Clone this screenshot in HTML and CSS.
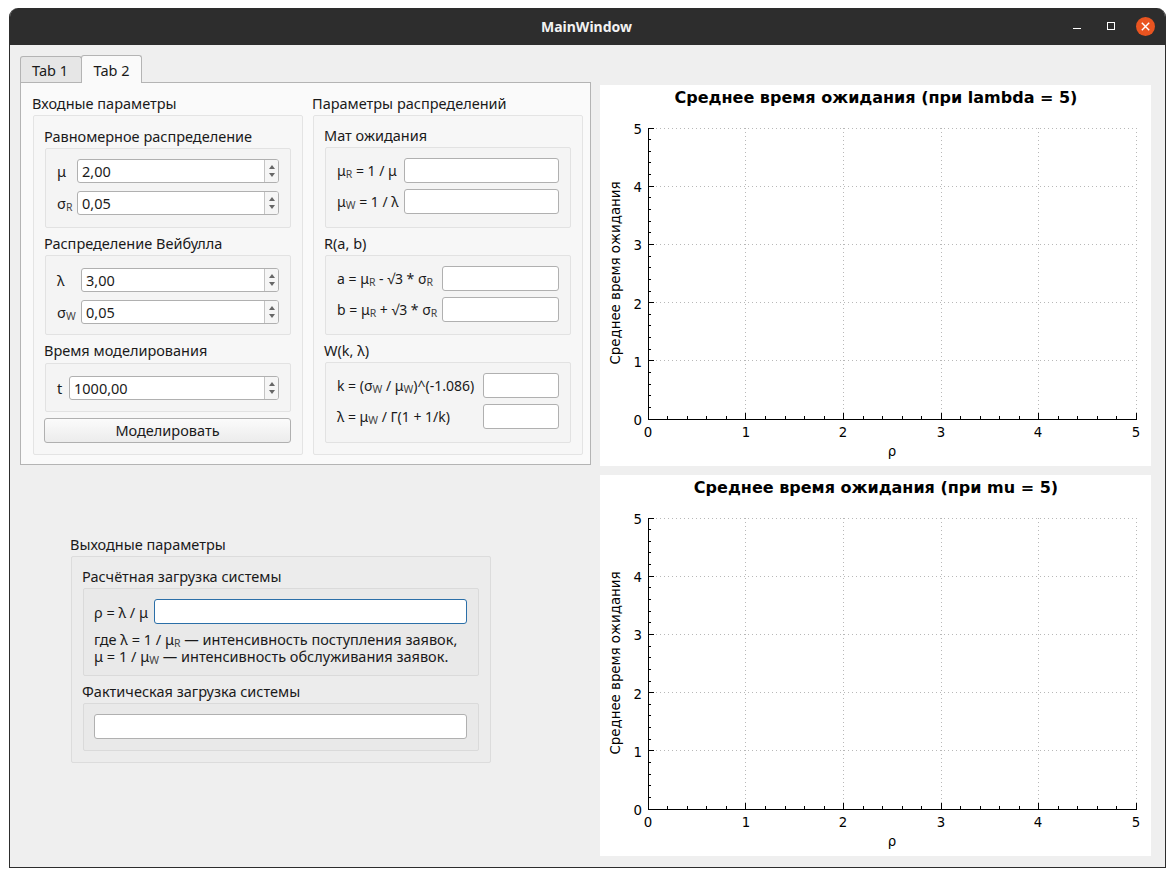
FILE: index.html
```html
<!DOCTYPE html>
<html lang="en">
<head>
    <meta charset="UTF-8">
    <title>MainWindow</title>
    <link rel="stylesheet" href="styles.css">
</head>
<body>
<div class="window">
    <div class="titlebar">
        <span class="title">MainWindow</span>
        <div class="controls">
            <svg width="12" height="13" viewBox="0 0 12 13"><path d="M1 8.5h8" stroke="#fff"/></svg>
            <svg width="12" height="13" viewBox="0 0 12 13"><rect x="2.5" y="2.5" width="7" height="7" fill="none" stroke="#fff"/></svg>
            <svg width="19" height="19" viewBox="0 0 19 19"><circle cx="9.5" cy="9.5" r="9.5" fill="#e95420"/><path d="M5.8 5.8l7.4 7.4M13.2 5.8l-7.4 7.4" stroke="#fff" stroke-width="1.4"/></svg>
        </div>
    </div>

    <div class="content">
        <div class="left">
            <div class="tabs">
                <div class="tab">Tab 1</div>
                <div class="tab active">Tab 2</div>
            </div>
            <div class="panel">
                <div class="col">
                    <div class="col-title">Входные параметры</div>
                    <div class="group">
                        <div class="box-title first">Равномерное распределение</div>
                        <div class="box grid-spin1">
                            <label>μ</label>
                            <div class="spin"><span class="spin-value">2,00</span><span class="spin-btns"><i class="up"></i><i class="down"></i></span></div>
                            <label>σ<sub>R</sub></label>
                            <div class="spin"><span class="spin-value">0,05</span><span class="spin-btns"><i class="up"></i><i class="down"></i></span></div>
                        </div>
                        <div class="box-title">Распределение Вейбулла</div>
                        <div class="box grid-spin2">
                            <label>λ</label>
                            <div class="spin"><span class="spin-value">3,00</span><span class="spin-btns"><i class="up"></i><i class="down"></i></span></div>
                            <label>σ<sub>W</sub></label>
                            <div class="spin"><span class="spin-value">0,05</span><span class="spin-btns"><i class="up"></i><i class="down"></i></span></div>
                        </div>
                        <div class="box-title">Время моделирования</div>
                        <div class="box grid-spin3">
                            <label>t</label>
                            <div class="spin"><span class="spin-value">1000,00</span><span class="spin-btns"><i class="up"></i><i class="down"></i></span></div>
                        </div>
                        <button class="btn" type="button">Моделировать</button>
                    </div>
                </div>

                <div class="col">
                    <div class="col-title">Параметры распределений</div>
                    <div class="group group-fields">
                        <div class="box-title first">Мат ожидания</div>
                        <div class="box fields grid-f1">
                            <label>μ<sub>R</sub> = 1 / μ</label>
                            <input type="text">
                            <label>μ<sub>W</sub> = 1 / λ</label>
                            <input type="text">
                        </div>
                        <div class="box-title">R(a, b)</div>
                        <div class="box fields grid-f2">
                            <label>a = μ<sub>R</sub> - √3 * σ<sub>R</sub></label>
                            <input type="text">
                            <label>b = μ<sub>R</sub> + √3 * σ<sub>R</sub></label>
                            <input type="text">
                        </div>
                        <div class="box-title">W(k, λ)</div>
                        <div class="box fields grid-f3">
                            <label>k = (σ<sub>W</sub> / μ<sub>W</sub>)^(-1.086)</label>
                            <input type="text">
                            <label>λ = μ<sub>W</sub> / Γ(1 + 1/k)</label>
                            <input type="text">
                        </div>
                    </div>
                </div>
            </div>

            <div class="output">
                <div class="col-title">Выходные параметры</div>
                <div class="group group-out">
                    <div class="box-title first">Расчётная загрузка системы</div>
                    <div class="box box-out">
                        <div class="rho-row">
                            <label>ρ = λ / μ</label>
                            <input class="focused" type="text">
                        </div>
                        <p class="note">где λ = 1 / μ<sub>R</sub> — интенсивность поступления заявок,<br>μ = 1 / μ<sub>W</sub> — интенсивность обслуживания заявок.</p>
                    </div>
                    <div class="box-title">Фактическая загрузка системы</div>
                    <div class="box box-out box-fact">
                        <input type="text">
                    </div>
                </div>
            </div>
        </div>

        <div class="charts">
            <svg class="chart" width="551" height="381" viewBox="0 0 551 381">
                <text class="chart-title" x="276" y="18">Среднее время ожидания (при lambda = 5)</text>
                <g id="plot-lines">
                    <path class="grid" d="M145.5 43V334M243.5 43V334M341.5 43V334M438.5 43V334M536.5 43V334M48 43.5H536M48 101.5H536M48 159.5H536M48 217.5H536M48 275.5H536"/>
                    <path class="axis" d="M48.5 43V335M48 334.5H537"/>
                    <path class="axis" d="M145.5 334V328M243.5 334V328M341.5 334V328M438.5 334V328M536.5 334V328M48 275.5H54M48 217.5H54M48 159.5H54M48 101.5H54M48 43.5H54"/>
                    <path class="axis" d="M67.5 334v-3M87.5 334v-3M106.5 334v-3M126.5 334v-3M165.5 334v-3M185.5 334v-3M204.5 334v-3M224.5 334v-3M263.5 334v-3M282.5 334v-3M302.5 334v-3M321.5 334v-3M360.5 334v-3M380.5 334v-3M399.5 334v-3M419.5 334v-3M458.5 334v-3M477.5 334v-3M497.5 334v-3M516.5 334v-3"/>
                    <path class="axis" d="M48 322.5h3M48 310.5h3M48 299.5h3M48 287.5h3M48 264.5h3M48 252.5h3M48 240.5h3M48 229.5h3M48 206.5h3M48 194.5h3M48 182.5h3M48 171.5h3M48 147.5h3M48 136.5h3M48 124.5h3M48 112.5h3M48 89.5h3M48 77.5h3M48 66.5h3M48 54.5h3"/>
                </g>
                <text class="tick-y" x="42" y="340">0</text>
                <text class="tick-y" x="42" y="282">1</text>
                <text class="tick-y" x="42" y="224">2</text>
                <text class="tick-y" x="42" y="165">3</text>
                <text class="tick-y" x="42" y="107">4</text>
                <text class="tick-y" x="42" y="49">5</text>
                <text class="tick-x" x="48" y="352">0</text>
                <text class="tick-x" x="146" y="352">1</text>
                <text class="tick-x" x="243" y="352">2</text>
                <text class="tick-x" x="341" y="352">3</text>
                <text class="tick-x" x="438" y="352">4</text>
                <text class="tick-x" x="536" y="352">5</text>
                <text class="axis-label" x="292" y="371">ρ</text>
                <text class="axis-label" transform="translate(20 188) rotate(-90)">Среднее время ожидания</text>
            </svg>
            <svg class="chart" width="551" height="381" viewBox="0 0 551 381">
                <text class="chart-title" x="276" y="18">Среднее время ожидания (при mu = 5)</text>
                <use href="#plot-lines"/>
                <text class="tick-y" x="42" y="340">0</text>
                <text class="tick-y" x="42" y="282">1</text>
                <text class="tick-y" x="42" y="224">2</text>
                <text class="tick-y" x="42" y="165">3</text>
                <text class="tick-y" x="42" y="107">4</text>
                <text class="tick-y" x="42" y="49">5</text>
                <text class="tick-x" x="48" y="352">0</text>
                <text class="tick-x" x="146" y="352">1</text>
                <text class="tick-x" x="243" y="352">2</text>
                <text class="tick-x" x="341" y="352">3</text>
                <text class="tick-x" x="438" y="352">4</text>
                <text class="tick-x" x="536" y="352">5</text>
                <text class="axis-label" x="292" y="371">ρ</text>
                <text class="axis-label" transform="translate(20 188) rotate(-90)">Среднее время ожидания</text>
            </svg>
        </div>
    </div>
</div>
</body>
</html>
```

FILE: styles.css
```css
* {
    box-sizing: border-box;
}
body {
    margin: 0;
    background: #fff;
    font-family: "Noto Sans", "Open Sans", sans-serif;
    font-size: 14.5px;
    color: #1a1a1a;
}
.window {
    width: 1157px;
    height: 860px;
    margin: 8px 0 0 9px;
    border: 1px solid #2d2d2d;
    border-top: none;
    border-radius: 9px 9px 0 0;
    background: #efefef;
    overflow: hidden;
    display: flex;
    flex-direction: column;
}
.titlebar {
    height: 37px;
    flex: none;
    background: #2d2d2d;
    position: relative;
    display: flex;
    align-items: center;
    justify-content: center;
}
.title {
    color: #f2f2f2;
    font-weight: 700;
    font-size: 14px;
    margin-right: 2px;
}
.controls {
    position: absolute;
    right: 10px;
    top: 9px;
    display: flex;
    align-items: center;
    gap: 21px;
}
.controls svg:last-child {
    margin-left: -2px;
}
.content {
    flex: 1;
    display: flex;
    gap: 9px;
}
.left {
    width: 571px;
    margin: 10px 0 0 10px;
    flex: none;
}
.tabs {
    display: flex;
    height: 27px;
    align-items: flex-end;
    position: relative;
    z-index: 1;
}
.tab {
    width: 62px;
    height: 26px;
    padding-right: 2px;
    background: #e6e6e6;
    border: 1px solid #b4b4b4;
    border-bottom: none;
    border-radius: 3px 3px 0 0;
    text-align: center;
    line-height: 27px;
}
.tab.active {
    width: 61px;
    height: 28px;
    padding-right: 0;
    margin-left: -1px;
    margin-bottom: -1px;
    background: #fafafa;
    line-height: 28px;
}
.panel {
    height: 383px;
    background: #fafafa;
    border: 1px solid #b4b4b4;
    padding: 10px 7px 9px 12px;
    display: grid;
    grid-template-columns: 270px 270px;
    column-gap: 10px;
}
.col-title {
    height: 22px;
    line-height: 20px;
    margin-left: -1px;
}
.group {
    height: 340px;
    background: #f7f7f7;
    border: 1px solid #e4e4e4;
    border-radius: 2px;
    padding: 10px 11px 0;
}
.group-fields {
    padding-top: 9px;
}
.box-title {
    height: 22px;
    line-height: 21px;
    margin-top: 5px;
    margin-left: -1px;
}
.box-title.first {
    margin-top: 0;
}
.box {
    background: #f4f4f4;
    border: 1px solid #e2e2e2;
    border-radius: 2px;
    padding: 10px 11px 12px;
    display: grid;
    align-items: center;
    row-gap: 8px;
}
.grid-spin1 {
    grid-template-columns: 20px 1fr;
}
.grid-spin2 {
    grid-template-columns: 24px 1fr;
    padding-top: 12px;
    padding-bottom: 10px;
}
.grid-spin3 {
    grid-template-columns: 12px 1fr;
    margin-top: 1px;
    padding-top: 12px;
    padding-bottom: 11px;
}
.fields {
    row-gap: 6px;
    padding-bottom: 13px;
}
.fields label {
    font-size: 14px;
}
.grid-f1 {
    grid-template-columns: 67px 1fr;
}
.grid-f2 {
    grid-template-columns: 105px 1fr;
    padding-bottom: 12px;
}
.grid-f3 {
    grid-template-columns: 146px 1fr;
}
label {
    white-space: nowrap;
}
sub {
    font-size: 10.5px;
    line-height: 0;
    vertical-align: -2px;
    color: #444;
}
input {
    width: 100%;
    height: 25px;
    border: 1px solid #b0b0b0;
    border-radius: 3px;
    background: #fff;
    display: block;
    outline: none;
}
input.focused {
    border-color: #2b6fa8;
}
.spin {
    height: 24px;
    display: flex;
    background: #fff;
    border: 1px solid #b0b0b0;
    border-radius: 3px;
    overflow: hidden;
}
.spin-value {
    flex: 1;
    padding-left: 4px;
    line-height: 23px;
}
.spin-btns {
    width: 14px;
    border-left: 1px solid #c4c4c4;
    background: #f5f5f5;
    display: flex;
    flex-direction: column;
    align-items: center;
    justify-content: center;
    gap: 4px;
}
.spin-btns i {
    display: block;
    width: 0;
    height: 0;
    border-left: 3.5px solid transparent;
    border-right: 3.5px solid transparent;
}
.spin-btns .up {
    border-bottom: 4px solid #666;
}
.spin-btns .down {
    border-top: 4px solid #666;
}
.btn {
    display: block;
    width: 247px;
    height: 25px;
    margin: 6px 0 0 -1px;
    padding: 0 0 2px;
    font: inherit;
    color: inherit;
    background: linear-gradient(#fbfbfb, #ececec);
    border: 1px solid #b0b0b0;
    border-radius: 3px;
}
.output {
    width: 420px;
    margin: 69px 0 0 51px;
}
.group-out {
    height: 207px;
    background: #ececec;
    border-color: #dcdcdc;
    padding-top: 9px;
}
.box-out {
    background: #e9e9e9;
    border-color: #dadada;
    display: block;
    padding-left: 10px;
    padding-bottom: 10px;
}
.rho-row {
    display: flex;
    align-items: center;
}
.rho-row label {
    width: 60px;
    flex: none;
}
.note {
    margin: 7px 0 0;
    line-height: 17px;
    white-space: nowrap;
}
.box-fact {
    height: 48px;
}
.charts {
    display: flex;
    flex-direction: column;
    gap: 9px;
    margin-top: 40px;
}
.chart {
    display: block;
    background: #fff;
    font-family: "DejaVu Sans", sans-serif;
}
.chart-title {
    font-size: 16px;
    font-weight: 700;
    text-anchor: middle;
    fill: #000;
}
.grid {
    fill: none;
    stroke: #b8b8b8;
    stroke-dasharray: 1 3;
}
.axis {
    fill: none;
    stroke: #000;
}
.tick-y {
    font-size: 13.33px;
    text-anchor: end;
    fill: #000;
}
.tick-x {
    font-size: 13.33px;
    text-anchor: middle;
    fill: #000;
}
.axis-label {
    font-size: 13.33px;
    text-anchor: middle;
    fill: #000;
}
```
